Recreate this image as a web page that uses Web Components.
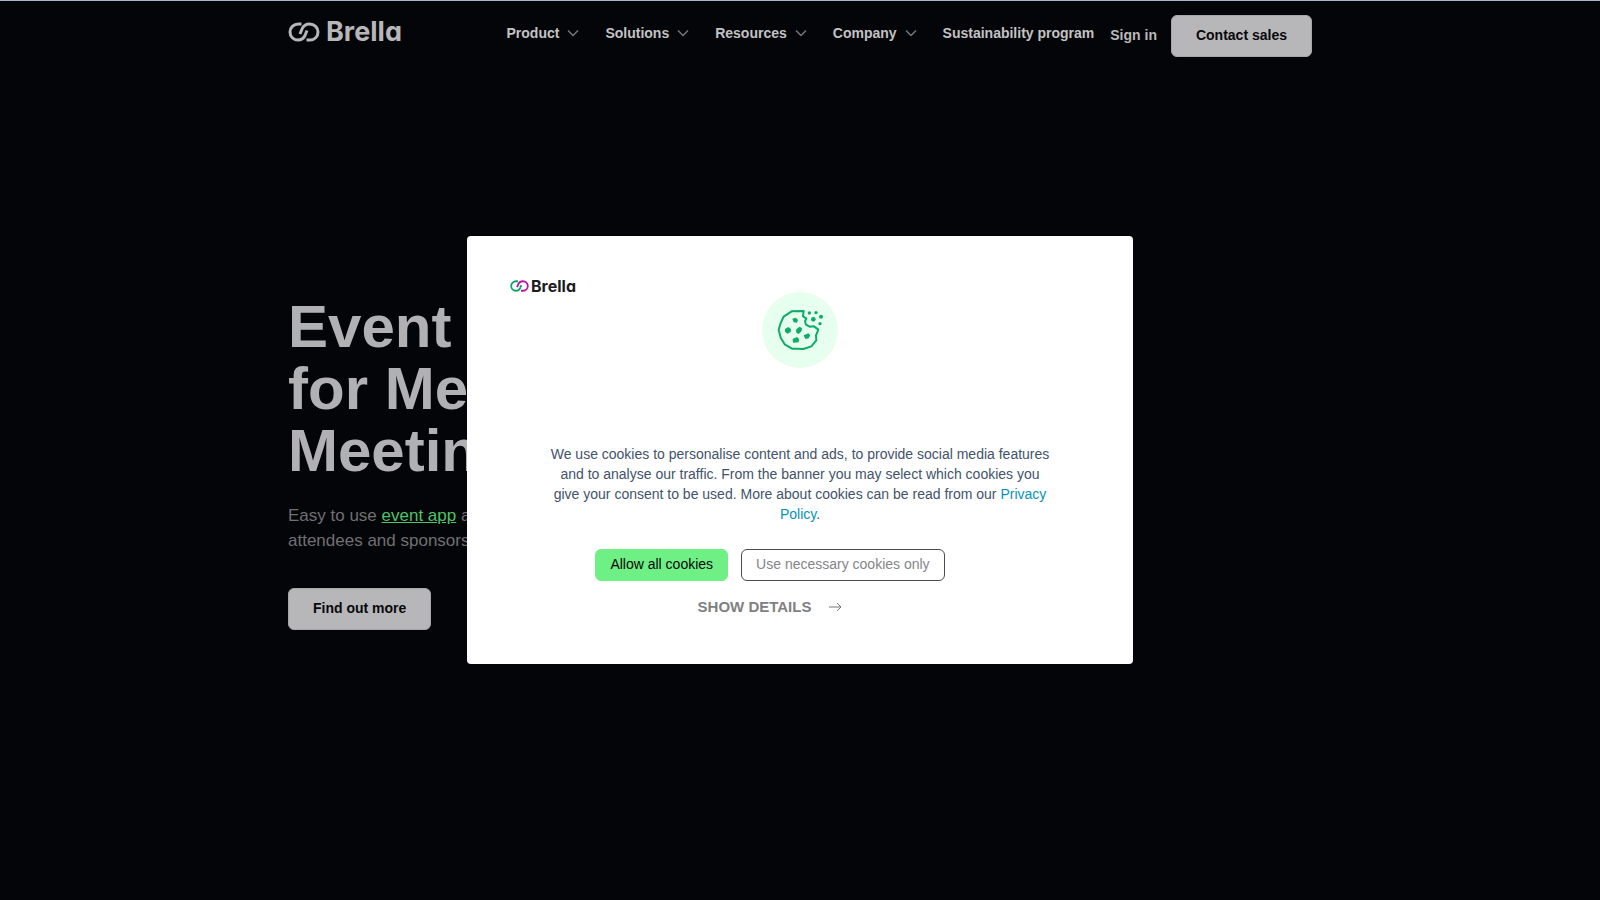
<!DOCTYPE html>
<html lang="en">
<head>
<meta charset="utf-8">
<meta name="viewport" content="width=device-width, initial-scale=1">
<title>Brella</title>
<style>
  body {
    margin: 0;
    background: #040508;
    color: #b5b5b7;
    font: 14px/20px "Liberation Sans", Arial, sans-serif;
  }
</style>
</head>
<body>
<brella-header>
  <nav-item menu>Product</nav-item>
  <nav-item menu>Solutions</nav-item>
  <nav-item menu>Resources</nav-item>
  <nav-item menu>Company</nav-item>
  <nav-item>Sustainability program</nav-item>
</brella-header>
<brella-hero></brella-hero>
<cookie-dialog></cookie-dialog>

<script>
class BrellaLogo extends HTMLElement {
  constructor() {
    super();
    this.attachShadow({ mode: 'open' });
    this.shadowRoot.innerHTML = `
      <style>
        :host {
          display: inline-flex; align-items: center; gap: 6px;
          color: #b7b7b9; --left: currentColor; --right: currentColor;
          font: 700 27px/26px Inter, "Open Sans", sans-serif;
          font-feature-settings: "cv11";
        }
        :host([small]) {
          gap: 2px; color: #1c1c20; --left: #00a868; --right: #c010a8;
          font-size: 16px; line-height: 16px;
        }
        svg { width: 32px; height: 20px; fill: none; stroke-width: 3; }
        :host([small]) svg { width: 19px; height: 12px; }
      </style>
      <svg viewBox="0 0 32 20" aria-hidden="true">
        <path stroke="var(--left)" d="M13.500 2h-3C5.500 2 2 5.500 2 10s3.500 8 8 8c3.200 0 5.500-1.500 7-4.500l2-5"/>
        <path stroke="var(--right)" d="M12 12l2-5C15.500 3.700 18 2 21.500 2c5 0 8.500 3.500 8.500 8s-3.500 8-8 8h-3.500"/>
      </svg>
      <span>Brella</span>
    `;
  }
}
customElements.define('brella-logo', BrellaLogo);

class NavItem extends HTMLElement {
  constructor() {
    super();
    this.attachShadow({ mode: 'open' });
    this.shadowRoot.innerHTML = `
      <style>
        :host { display: block; }
        a { display: flex; align-items: center; gap: 8px; color: #c3c3c5; text-decoration: none; font-weight: 700; white-space: nowrap; }
        svg { display: none; width: 12px; height: 8px; fill: none; stroke: #77777a; stroke-width: 1.500; }
        :host([menu]) svg { display: block; }
      </style>
      <a href="#"><slot></slot><svg viewBox="0 0 12 8" aria-hidden="true"><path d="M1 1.500l5 5 5-5"/></svg></a>
    `;
  }
}
customElements.define('nav-item', NavItem);

class BrellaButton extends HTMLElement {
  constructor() {
    super();
    this.attachShadow({ mode: 'open' });
    this.shadowRoot.innerHTML = `
      <style>
        :host { display: inline-block; }
        button {
          display: block; margin: 0; padding: 0 24px 2px; height: 42px;
          border: 1px solid #a6a6a8; border-radius: 6px;
          background: #b7b7b9; color: #08080b;
          font: inherit; font-weight: 700; white-space: nowrap; cursor: pointer;
        }
        :host([kind]) button { height: 32px; padding: 0 14px 2px; font-weight: 400; }
        :host([kind="accept"]) button { background: #6ff084; border-color: #6ff084; }
        :host([kind="necessary"]) button { background: #fff; border-color: #4c4c4f; color: #858588; }
      </style>
      <button type="button"><slot></slot></button>
    `;
  }
}
customElements.define('brella-button', BrellaButton);

class BrellaHeader extends HTMLElement {
  constructor() {
    super();
    this.attachShadow({ mode: 'open' });
    this.shadowRoot.innerHTML = `
      <style>
        :host { display: block; border-top: 1px solid #a9b4c4; }
        header {
          display: flex; align-items: flex-start;
          max-width: 1024px; margin: 0 auto; padding: 14px 24px;
        }
        brella-logo { padding-top: 4px; }
        nav { display: flex; gap: 26px; margin-left: auto; padding-top: 8px; }
        .sign { margin: 10px 14px 0 16px; color: #b9b9bb; font-weight: 700; text-decoration: none; white-space: nowrap; }
      </style>
      <header>
        <brella-logo></brella-logo>
        <nav><slot></slot></nav>
        <a class="sign" href="#">Sign in</a>
        <brella-button>Contact sales</brella-button>
      </header>
    `;
  }
}
customElements.define('brella-header', BrellaHeader);

class BrellaHero extends HTMLElement {
  constructor() {
    super();
    this.attachShadow({ mode: 'open' });
    this.shadowRoot.innerHTML = `
      <style>
        :host { display: block; max-width: 1024px; margin: 0 auto; padding: 225px 24px 0; }
        h1 { margin: 0; color: #b1b1b3; font-size: 60px; line-height: 62px; }
        p { margin: 21px 0 35px; color: #707073; font-size: 17px; line-height: 25px; }
        p a { color: #4cc467; }
      </style>
      <h1>Event App<br>for Meaningful<br>Meetings</h1>
      <p>Easy to use <a href="#">event app</a> and platform for<br>attendees and sponsors</p>
      <brella-button>Find out more</brella-button>
    `;
  }
}
customElements.define('brella-hero', BrellaHero);

class CookieDialog extends HTMLElement {
  constructor() {
    super();
    this.attachShadow({ mode: 'open' });
    this.shadowRoot.innerHTML = `
      <style>
        :host { position: fixed; inset: 0; display: grid; place-items: center; }
        section {
          box-sizing: border-box; width: min(666px, 100%); padding: 42px 43px 47px;
          border-radius: 4px; background: #fff; color: #42536a;
        }
        brella-logo { display: flex; }
        .cookie { display: block; width: 76px; height: 76px; margin: -2px auto 76px; }
        p { max-width: 505px; margin: 0 auto 25px; text-align: center; }
        p a { color: #0693b4; text-decoration: none; }
        .actions { display: flex; flex-direction: column; align-items: center; gap: 16px; margin-right: 60px; }
        .row { display: flex; gap: 13px; }
        .details {
          display: flex; align-items: center; gap: 17px; margin: 0; padding: 0;
          border: 0; background: none; color: #808083;
          font: inherit; font-size: 15px; font-weight: 700; cursor: pointer;
        }
        .details svg { width: 14px; height: 10px; fill: none; stroke: #77777a; }
      </style>
      <section role="dialog" aria-label="Cookie consent">
        <brella-logo small></brella-logo>
        <svg class="cookie" viewBox="21 21 228 228" aria-hidden="true">
          <circle cx="135" cy="135" r="114" fill="#e6ffee"/>
          <path fill="none" stroke="#0cad66" stroke-width="6" stroke-linejoin="round"
            d="M146 78L110 79 86 95 77 114 71 134 77 158 89 178 111 191 127 191 145 192 169 184 184 166 183 151 190 134 177 124 164 125 153 119 150 109 154 100 144 94z"/>
          <g fill="#0cad66">
            <path d="M112 101l10-3 7 6-3 9-10-1zM90 132l10-6 8 6-1 9-10 5-7-6zM123 134l10-9 8 4-1 9-9 9-7-4zM146 151l14-6 6 6-5 9-10 2zM113 162l13-6 6 6-1 10-17 1z"/>
            <circle cx="163" cy="84" r="5"/><circle cx="183" cy="83" r="5"/>
            <circle cx="198" cy="95" r="6"/><circle cx="175" cy="103" r="7"/>
            <circle cx="195" cy="116" r="5"/>
          </g>
        </svg>
        <p>We use cookies to personalise content and ads, to provide social media features and to analyse our traffic. From the banner you may select which cookies you give your consent to be used. More about cookies can be read from our <a href="#">Privacy Policy</a>.</p>
        <div class="actions">
          <div class="row">
            <brella-button kind="accept">Allow all cookies</brella-button>
            <brella-button kind="necessary">Use necessary cookies only</brella-button>
          </div>
          <button class="details" type="button">SHOW DETAILS
            <svg viewBox="0 0 14 10" aria-hidden="true"><path d="M1 5h12M9 1l4 4-4 4"/></svg>
          </button>
        </div>
      </section>
    `;
  }
}
customElements.define('cookie-dialog', CookieDialog);
</script>
</body>
</html>
